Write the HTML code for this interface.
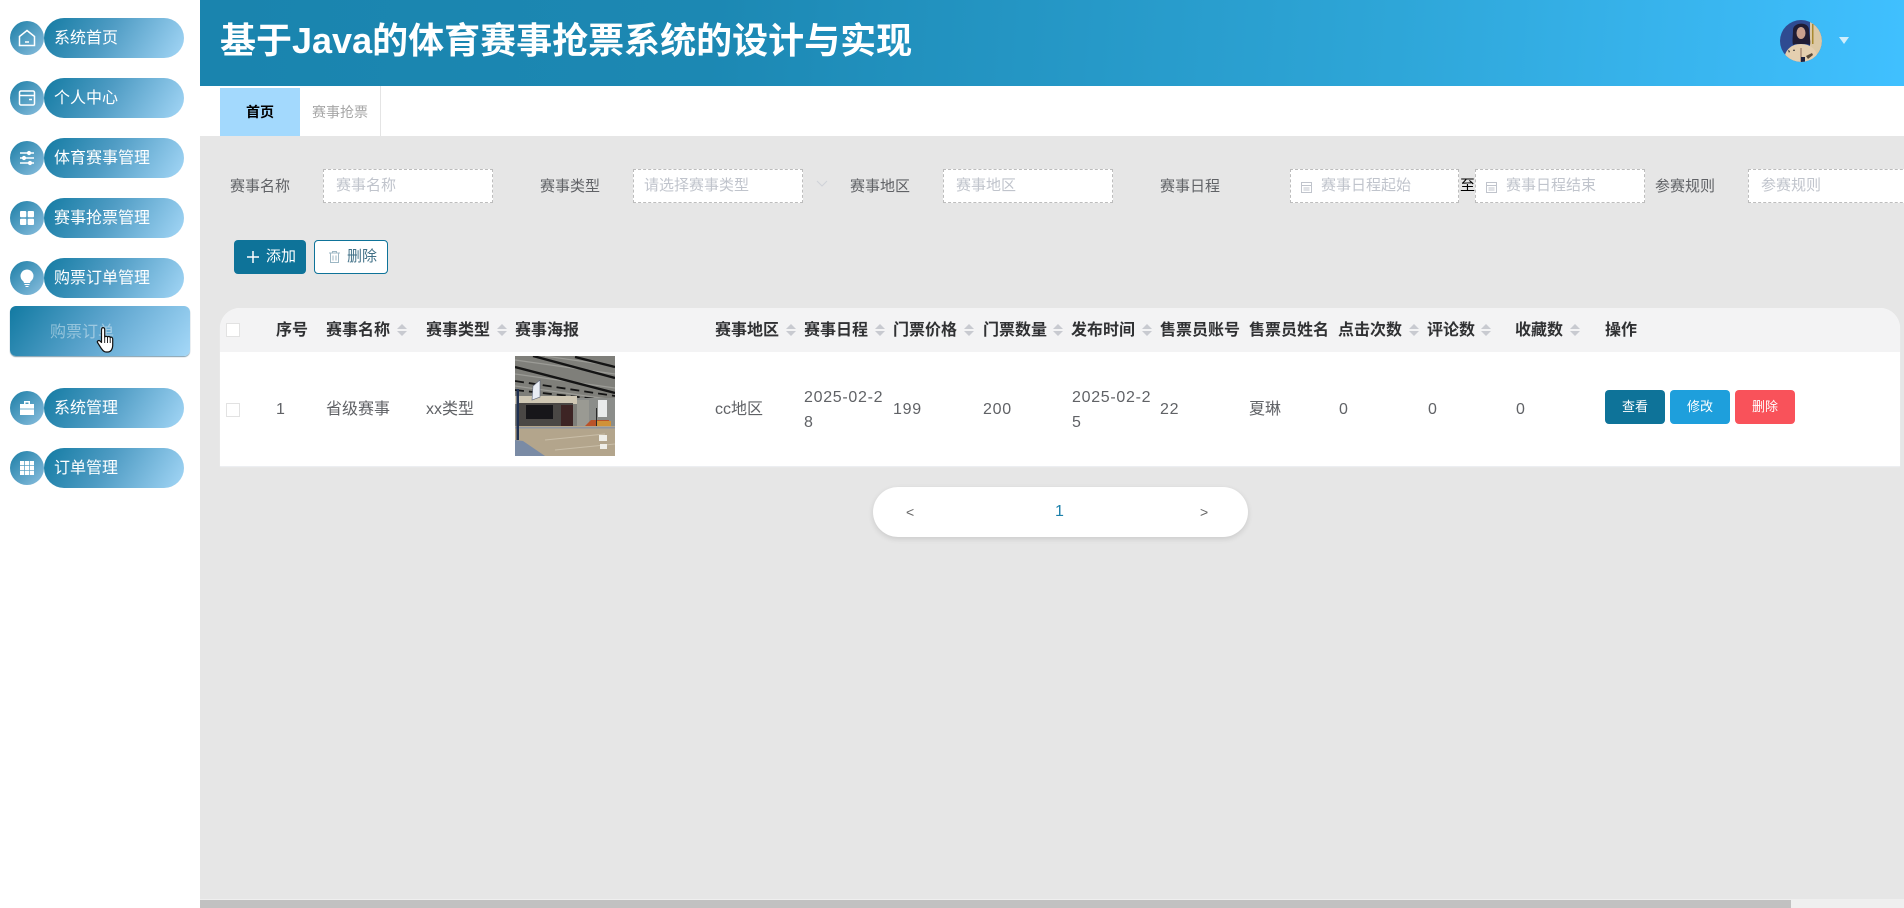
<!DOCTYPE html>
<html lang="zh-CN">
<head>
<meta charset="utf-8">
<title>基于Java的体育赛事抢票系统的设计与实现</title>
<style>
html,body{margin:0;padding:0;width:1904px;height:908px;overflow:hidden;background:#fff;font-family:"Liberation Sans","Noto Sans CJK SC",sans-serif}
div,span,svg{position:absolute;box-sizing:border-box}
.t{white-space:nowrap}
.pill{left:44px;width:140px;height:40px;border-radius:20px;background:linear-gradient(120deg,#137ba3 0%,#4f9cc4 45%,#a3d6f6 100%);color:#fff;font-size:16px;line-height:42px;padding-left:10px;white-space:nowrap}
.circ{left:10px;width:34px;height:34px;border-radius:50%;background:linear-gradient(135deg,#1b7ea6,#8cbfdf)}
.circ svg{left:7px;top:7px;width:20px;height:20px}
.lb{font-size:15px;color:#606266;top:177px;line-height:20px;white-space:nowrap}
.ip{top:169px;height:34px;background:#fff;border:1px dashed #bdbdbd;font-size:15px;line-height:32px;color:#c0c4cc;white-space:nowrap;overflow:hidden}
.th{top:320px;font-size:16px;font-weight:bold;line-height:22px;color:#303133;white-space:nowrap}
.td{top:398px;font-size:16px;line-height:24px;color:#606266;white-space:nowrap;letter-spacing:.7px}
.c{top:323px;width:10px;height:14px}
.c:before,.c:after{content:"";position:absolute;left:0;border-left:5px solid transparent;border-right:5px solid transparent}
.c:before{top:1px;border-bottom:5px solid #c8cad0}
.c:after{top:8px;border-top:5px solid #c8cad0}
.btn{top:390px;width:60px;height:34px;border-radius:4px;color:#fff;font-size:13px;line-height:34px;text-align:center}
</style>
</head>
<body>

<!-- sidebar -->
<div class="circ" style="top:21px"><svg viewBox="0 0 20 20" fill="none" stroke="#fff" stroke-width="1.5"><path d="M2.500 8.500 10 2.500l7.500 6v9h-15z"/><path d="M8 14h4"/></svg></div>
<div class="pill" style="top:18px">系统首页</div>
<div class="circ" style="top:81px"><svg viewBox="0 0 20 20" fill="none" stroke="#fff" stroke-width="1.5"><rect x="2.500" y="3" width="15" height="14" rx="1.500"/><path d="M2.500 7.500h15M12 11.500h3"/></svg></div>
<div class="pill" style="top:78px">个人中心</div>
<div class="circ" style="top:141px"><svg viewBox="0 0 20 20" fill="none" stroke="#fff" stroke-width="1.600"><path d="M3 5h14M3 10h14M3 15h14"/><circle cx="12" cy="5" r="1.300" fill="#fff"/><circle cx="7" cy="10" r="1.300" fill="#fff"/><circle cx="13" cy="15" r="1.300" fill="#fff"/></svg></div>
<div class="pill" style="top:138px">体育赛事管理</div>
<div class="circ" style="top:201px"><svg viewBox="0 0 20 20" fill="#fff"><rect x="3" y="3" width="6.300" height="6.300" rx="1"/><rect x="10.700" y="3" width="6.300" height="6.300" rx="1"/><rect x="3" y="10.700" width="6.300" height="6.300" rx="1"/><rect x="10.700" y="10.700" width="6.300" height="6.300" rx="1"/></svg></div>
<div class="pill" style="top:198px">赛事抢票管理</div>
<div class="circ" style="top:261px"><svg viewBox="0 0 20 20" fill="#fff"><path d="M10 1.500a6.500 6.500 0 0 0-3.500 12l.5 1.500h6l.5-1.500A6.500 6.500 0 0 0 10 1.500z"/><path d="M7.500 16h5v1h-5zM8.500 18h3v1h-3z"/></svg></div>
<div class="pill" style="top:258px">购票订单管理</div>

<div style="left:10px;top:306px;width:180px;height:50px;border-radius:6px;background:linear-gradient(125deg,#127aa2 0%,#5fa6cf 50%,#a5d8f8 100%);box-shadow:0 1px 1px rgba(0,60,90,.5)"></div>
<div class="t" style="left:50px;top:322px;font-size:16px;line-height:22px;color:rgba(255,255,255,.42)">购票订单</div>

<div class="circ" style="top:391px"><svg viewBox="0 0 20 20" fill="#fff"><path d="M7 3h6v3h-1.500V4.500h-3V6H7z"/><rect x="3" y="6" width="14" height="4.600"/><rect x="3" y="11.400" width="14" height="5.600"/></svg></div>
<div class="pill" style="top:388px">系统管理</div>
<div class="circ" style="top:451px"><svg viewBox="0 0 20 20" fill="#fff"><rect x="3" y="3" width="4.200" height="4.200"/><rect x="7.900" y="3" width="4.200" height="4.200"/><rect x="12.800" y="3" width="4.200" height="4.200"/><rect x="3" y="7.900" width="4.200" height="4.200"/><rect x="7.900" y="7.900" width="4.200" height="4.200"/><rect x="12.800" y="7.900" width="4.200" height="4.200"/><rect x="3" y="12.800" width="4.200" height="4.200"/><rect x="7.900" y="12.800" width="4.200" height="4.200"/><rect x="12.800" y="12.800" width="4.200" height="4.200"/></svg></div>
<div class="pill" style="top:448px">订单管理</div>

<!-- main bg -->
<div style="left:200px;top:136px;width:1704px;height:772px;background:#e6e6e6"></div>

<!-- header -->
<div style="left:200px;top:0;width:1704px;height:86px;background:linear-gradient(95deg,#1a84ae 0%,#1c88b3 30%,#2ea6d8 70%,#40c0ff 100%)"></div>
<div class="t" style="left:220px;top:16px;font-size:36px;font-weight:bold;line-height:50px;color:#fff">基于Java的体育赛事抢票系统的设计与实现</div>
<svg style="left:1780px;top:20px" width="42" height="42" viewBox="0 0 42 42">
<defs><clipPath id="av"><circle cx="21" cy="21" r="21"/></clipPath></defs>
<g clip-path="url(#av)">
<rect width="42" height="42" fill="#2f4b91"/>
<rect x="30" width="12" height="42" fill="#dcc8a4"/>
<rect x="32" y="4" width="1.500" height="20" fill="#a88a30"/>
<path d="M13 10C13 2 29 1 29 10c0 5 2 11 1 15l-3-1-12 0-2 1c-1-4 0-10 0-15z" fill="#1f1c34"/>
<ellipse cx="21" cy="13" rx="4.500" ry="6" fill="#c9a08e"/>
<path d="M4 42c0-12 7-18 17-18s17 6 17 18z" fill="#e4cfb0"/>
<path d="M20 28h2v14h-2z" fill="#b89c84"/>
<path d="M21 37h4v5h-4z" fill="#1c2240"/>
<path d="M26 36l6-3 1 2-5 4z" fill="#5a4a3a"/>
<path d="M8 30l2 1-1 2zM14 29l1 2-2 0z" fill="#333"/>
</g>
</svg>
<div style="left:1839px;top:37px;width:0;height:0;border-left:5px solid transparent;border-right:5px solid transparent;border-top:7px solid #cfeefc"></div>

<!-- tabs -->
<div class="t" style="left:220px;top:88px;width:80px;height:48px;background:#a3d9fd;color:#000;font-size:14px;font-weight:bold;line-height:48px;text-align:center">首页</div>
<div class="t" style="left:300px;top:86px;width:81px;height:50px;border-right:1px solid #e4e4e4;color:#a6a6a6;font-size:14px;line-height:52px;text-align:center">赛事抢票</div>

<!-- search form -->
<div class="lb" style="left:230px">赛事名称</div>
<div class="ip" style="left:323px;width:170px;padding-left:12px">赛事名称</div>
<div class="lb" style="left:540px">赛事类型</div>
<div class="ip" style="left:633px;width:170px;padding-left:10px">请选择赛事类型</div>
<svg style="left:816px;top:180px" width="12" height="8" viewBox="0 0 12 8" fill="none" stroke="#cfd2d8" stroke-width="1"><path d="M1 1l5 5 5-5"/></svg>
<div class="lb" style="left:850px">赛事地区</div>
<div class="ip" style="left:943px;width:170px;padding-left:12px">赛事地区</div>
<div class="lb" style="left:1160px">赛事日程</div>
<div class="ip" style="left:1290px;width:169px;padding-left:30px">赛事日程起始</div>
<svg style="left:1300px;top:181px" width="13" height="13" viewBox="0 0 13 13" fill="none" stroke="#c0c4cc" stroke-width="1"><rect x="1.500" y="1.500" width="10" height="10"/><path d="M1.500 4.500h10M3.500 7h6M3.500 9h6"/></svg>
<div class="t" style="left:1460px;top:176px;font-size:15px;line-height:20px;color:#000">至</div>
<div class="ip" style="left:1475px;width:170px;padding-left:30px">赛事日程结束</div>
<svg style="left:1485px;top:181px" width="13" height="13" viewBox="0 0 13 13" fill="none" stroke="#c0c4cc" stroke-width="1"><rect x="1.500" y="1.500" width="10" height="10"/><path d="M1.500 4.500h10M3.500 7h6M3.500 9h6"/></svg>
<div class="lb" style="left:1655px">参赛规则</div>
<div class="ip" style="left:1748px;width:170px;padding-left:12px">参赛规则</div>

<!-- action buttons -->
<div style="left:234px;top:240px;width:72px;height:34px;border-radius:4px;background:#0e7399"></div>
<svg style="left:246px;top:250px" width="14" height="14" viewBox="0 0 14 14" fill="none" stroke="#fff" stroke-width="1.500"><path d="M7 1v12M1 7h12"/></svg>
<div class="t" style="left:266px;top:247px;font-size:15px;line-height:20px;color:#fff">添加</div>
<div style="left:314px;top:240px;width:74px;height:34px;border-radius:4px;background:#fff;border:1px solid #0e7399"></div>
<svg style="left:328px;top:250px" width="13" height="14" viewBox="0 0 13 14" fill="none" stroke="#9db7c4" stroke-width="1"><path d="M1 3h11M4.500 3V1.500h4V3M2.500 3v9.500h8V3M5 5.500v5M8 5.500v5"/></svg>
<div class="t" style="left:347px;top:247px;font-size:15px;line-height:20px;color:#3f6f86">删除</div>

<!-- table -->
<div style="left:220px;top:308px;width:1680px;height:158px;background:#fff;border-radius:20px 20px 0 0;box-shadow:0 1px 1px #eef0f3;overflow:hidden"></div>
<div style="left:220px;top:308px;width:1680px;height:44px;background:#f3f3f4;border-radius:20px 20px 0 0"></div>

<div style="left:226px;top:323px;width:14px;height:14px;background:#fff;border:1px solid #e2e2e2"></div>
<div class="th" style="left:276px">序号</div>
<div class="th" style="left:326px">赛事名称</div><span class="c" style="left:397px"></span>
<div class="th" style="left:426px">赛事类型</div><span class="c" style="left:497px"></span>
<div class="th" style="left:515px">赛事海报</div>
<div class="th" style="left:715px">赛事地区</div><span class="c" style="left:786px"></span>
<div class="th" style="left:804px">赛事日程</div><span class="c" style="left:875px"></span>
<div class="th" style="left:893px">门票价格</div><span class="c" style="left:964px"></span>
<div class="th" style="left:983px">门票数量</div><span class="c" style="left:1053px"></span>
<div class="th" style="left:1071px">发布时间</div><span class="c" style="left:1142px"></span>
<div class="th" style="left:1160px">售票员账号</div>
<div class="th" style="left:1249px">售票员姓名</div>
<div class="th" style="left:1338px">点击次数</div><span class="c" style="left:1409px"></span>
<div class="th" style="left:1427px">评论数</div><span class="c" style="left:1481px"></span>
<div class="th" style="left:1515px">收藏数</div><span class="c" style="left:1570px"></span>
<div class="th" style="left:1605px">操作</div>

<div style="left:226px;top:403px;width:14px;height:14px;background:#fff;border:1px solid #e2e2e2"></div>
<div class="td" style="left:276px">1</div>
<div class="td" style="left:326px;letter-spacing:0">省级赛事</div>
<div class="td" style="left:426px;letter-spacing:0">xx类型</div>
<svg style="left:515px;top:356px" width="100" height="100" viewBox="0 0 100 100" preserveAspectRatio="none">
<rect width="100" height="100" fill="#7f7f7a"/>
<g stroke="#9c9c97" stroke-width="1.200" fill="none">
<path d="M0 4 100 18"/><path d="M0 18 100 32"/><path d="M0 30 100 44"/><path d="M30 0 100 10"/>
</g>
<g stroke="#141414" stroke-width="2.400" fill="none">
<path d="M18 0 100 22"/><path d="M0 11 100 37"/><path d="M60 1 100 11"/>
</g>
<g stroke="#141414" stroke-width="1.800" fill="none" stroke-dasharray="9 5">
<path d="M0 25 100 40"/><path d="M0 34 100 45"/>
</g>
<rect y="40" width="62" height="8" fill="#cfc7b4"/>
<rect x="62" y="42" width="38" height="28" fill="#8b8d8a"/>
<rect x="2" y="47" width="56" height="24" fill="#4a4745"/>
<rect x="11" y="49" width="27" height="14" fill="#17161a"/>
<rect x="46" y="49" width="12" height="22" fill="#3d2424"/>
<rect x="62" y="44" width="12" height="26" fill="#9a9a93"/>
<rect x="83" y="44" width="9" height="17" fill="#e9ebeb"/>
<path d="M70 70l6-6h18v6z" fill="#b9532a"/>
<rect x="82" y="65" width="14" height="5" fill="#d09238"/>
<rect y="70" width="100" height="30" fill="#b3a58c"/>
<rect y="71" width="100" height="1.500" fill="#8e95a0"/>
<path d="M30 84 90 78M40 94 100 88" stroke="#c9bea8" stroke-width="1"/>
<rect x="84" y="79" width="8" height="6" fill="#efeee8"/>
<rect x="85" y="88" width="7" height="5" fill="#efeee8"/>
<path d="M0 84 8 85 30 100H0z" fill="#7a8ba5"/>
<rect x="1.500" y="33" width="2.500" height="51" fill="#1f3050"/>
<path d="M18 30 25 24V41L17 44z" fill="#e8ecf4" stroke="#5d6578" stroke-width=".6"/>
<rect x="81" y="52" width="1" height="18" fill="#2a2a2a"/>
</svg>
<div class="td" style="left:715px;letter-spacing:0">cc地区</div>
<div class="td" style="left:804px;top:385px;line-height:25px">2025-02-2<br>8</div>
<div class="td" style="left:893px">199</div>
<div class="td" style="left:983px">200</div>
<div class="td" style="left:1072px;top:385px;line-height:25px">2025-02-2<br>5</div>
<div class="td" style="left:1160px">22</div>
<div class="td" style="left:1249px;letter-spacing:0">夏琳</div>
<div class="td" style="left:1339px">0</div>
<div class="td" style="left:1428px">0</div>
<div class="td" style="left:1516px">0</div>
<div class="btn" style="left:1605px;background:#0e7399">查看</div>
<div class="btn" style="left:1670px;background:#1e9fdc">修改</div>
<div class="btn" style="left:1735px;background:#f9525a">删除</div>

<!-- pager -->
<div style="left:873px;top:487px;width:375px;height:50px;border-radius:25px;background:#fff;box-shadow:0 2px 6px rgba(0,0,0,.12)"></div>
<div class="t" style="left:906px;top:502px;font-size:14px;line-height:20px;color:#666">&lt;</div>
<div class="t" style="left:1055px;top:501px;font-size:16px;line-height:22px;color:#1c80aa">1</div>
<div class="t" style="left:1200px;top:502px;font-size:14px;line-height:20px;color:#666">&gt;</div>

<!-- scrollbar -->
<div style="left:200px;top:899px;width:1704px;height:9px;background:#efefef"></div>
<div style="left:200px;top:900px;width:1591px;height:8px;background:#c1c1c1"></div>

<!-- cursor -->
<svg style="left:96px;top:326px" width="20" height="28" viewBox="0 0 20 28">
<path d="M6 2c1.300-1 2.700 0 2.700 1.500V11c.8-1 2.300-.9 2.800 0 .8-.8 2.300-.6 2.700.4 1-.6 2.500.1 2.500 1.600v6.500c0 3-1.500 6.500-5 6.500H10C7.500 26 6.500 24 5 22L1.500 16.500c-.7-1.200 1-2.700 2.500-1.500l1.500 1.500V3.500z" fill="#fff" stroke="#111" stroke-width="1.200" stroke-linejoin="round"/>
<path d="M8.700 11v6M11.500 11v6M14.200 11.500V17" fill="none" stroke="#111" stroke-width=".9"/>
</svg>

</body>
</html>
